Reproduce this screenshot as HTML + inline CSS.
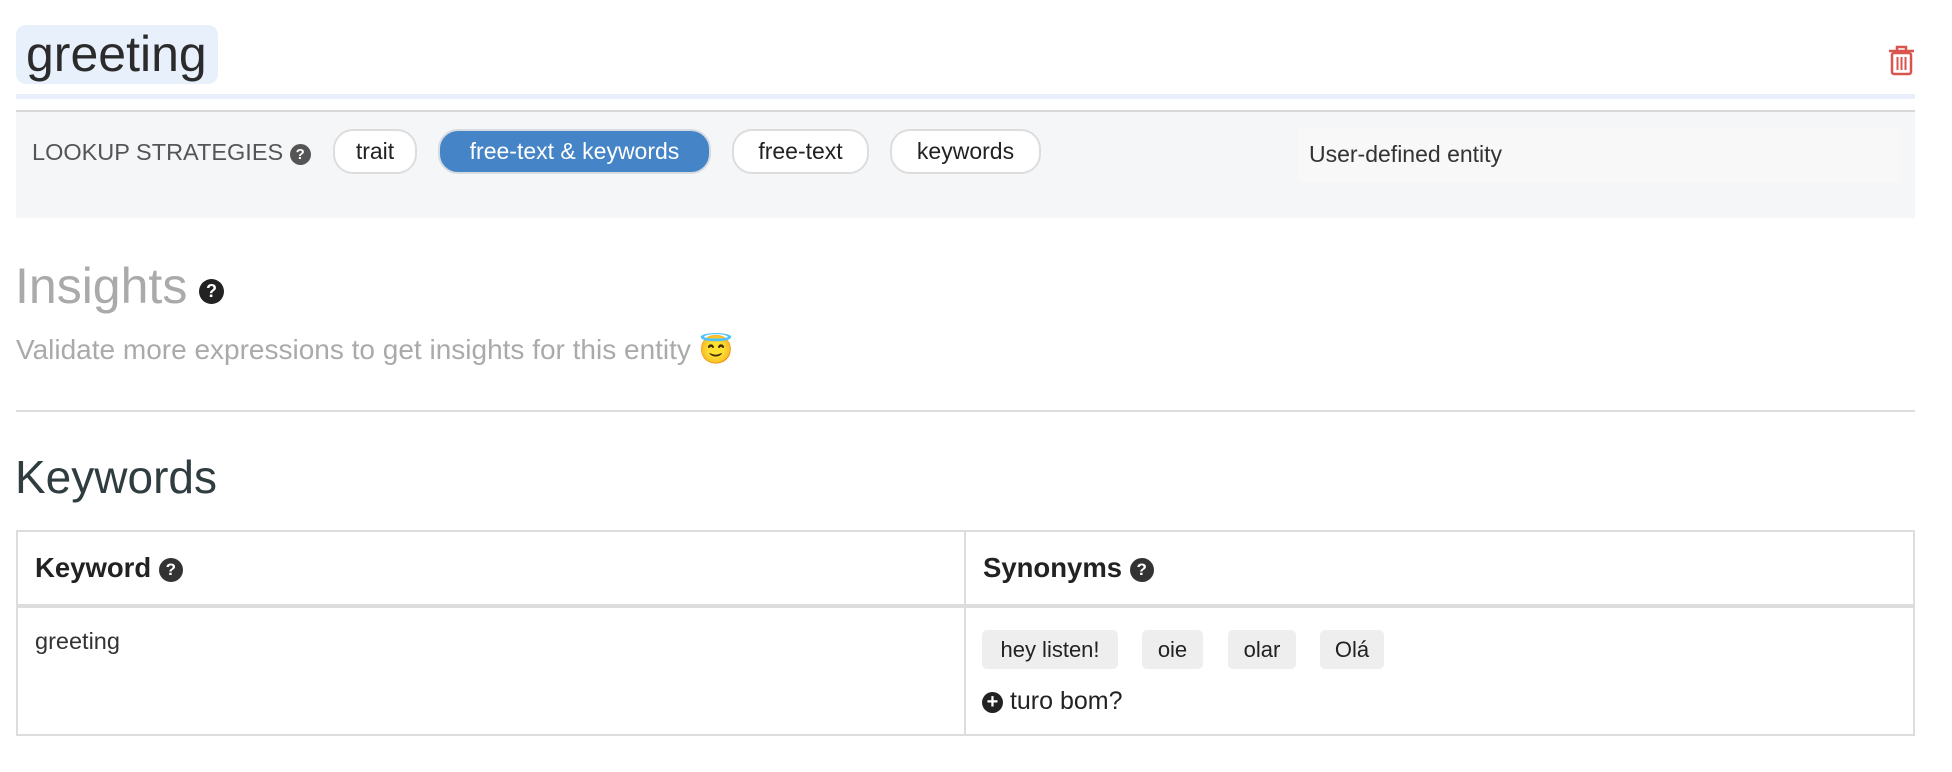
<!DOCTYPE html>
<html><head><meta charset="utf-8"><style>
*{box-sizing:border-box;margin:0;padding:0}
body{width:1952px;height:772px;background:#fff;font-family:"Liberation Sans",sans-serif;color:#333;position:relative;overflow:hidden}
.a{position:absolute}
.q{display:inline-block;border-radius:50%;background:#333;color:#fff;font-weight:bold;text-align:center}
.pill{position:absolute;top:129px;height:45px;border:2px solid #ddd;border-radius:20px;background:#fff;font-size:23px;line-height:41px;text-align:center;color:#222}
.chip{position:absolute;top:630px;height:39px;background:#eee;border-radius:5px;font-size:22px;line-height:39px;text-align:center;color:#222}
</style></head><body>
<div class="a" style="left:16px;top:25px;width:202px;height:59px;background:#e8f0fc;border-radius:10px"></div>
<div class="a" style="left:26px;top:25px;font-size:50px;line-height:59px;color:#2b2b2b">greeting</div>
<svg class="a" style="left:1888px;top:45px" width="27" height="31" viewBox="0 0 27 31"><path d="M9 5V2h9v3M1 6h25" stroke="#d9534f" stroke-width="2.5" fill="none"/><rect x="4" y="8" width="19" height="21" rx="2" stroke="#d9534f" stroke-width="2.5" fill="none"/><path d="M9.5 12v13M13.5 12v13M17.5 12v13" stroke="#d9534f" stroke-width="2"/></svg>
<div class="a" style="left:16px;top:94px;width:1899px;height:5px;background:#e8effb"></div>
<div class="a" style="left:16px;top:110px;width:1899px;height:2px;background:#d8d8d8"></div>
<div class="a" style="left:16px;top:112px;width:1899px;height:106px;background:#f5f6f8"></div>
<div class="a" style="left:32px;top:140px;font-size:23.5px;line-height:24px;color:#555">LOOKUP STRATEGIES <span class="q" style="width:21px;height:21px;font-size:15px;line-height:21px;background:#555;vertical-align:1px">?</span></div>
<div class="pill" style="left:333px;width:84px">trait</div>
<div class="pill" style="left:438px;width:273px;background:#4584c6;color:#fff;border-color:#d6dbe2">free-text &amp; keywords</div>
<div class="pill" style="left:732px;width:137px">free-text</div>
<div class="pill" style="left:890px;width:151px">keywords</div>
<div class="a" style="left:1299px;top:127px;width:601px;height:55px;background:#f8f8f9;font-size:23px;line-height:55px;padding-left:10px;color:#333">User-defined entity</div>
<div class="a" style="left:15px;top:256px;font-size:50px;line-height:60px;color:#aaa">Insights</div>
<span class="a q" style="left:199px;top:279px;width:25px;height:25px;font-size:18px;line-height:25px;background:#222">?</span>
<div class="a" style="left:16px;top:334px;font-size:28px;line-height:32px;color:#aaa">Validate more expressions to get insights for this entity <span style="font-size:28px">😇</span></div>
<div class="a" style="left:16px;top:410px;width:1899px;height:2px;background:#ddd"></div>
<div class="a" style="left:15px;top:448px;font-size:46px;line-height:58px;color:#2f3d40">Keywords</div>
<div class="a" style="left:16px;top:530px;width:1899px;height:206px;border:2px solid #ddd"></div>
<div class="a" style="left:16px;top:604px;width:1899px;height:4px;background:#ddd"></div>
<div class="a" style="left:964px;top:530px;width:2px;height:206px;background:#ddd"></div>
<div class="a" style="left:35px;top:553px;font-size:27.5px;font-weight:bold;line-height:30px;color:#222">Keyword <span class="q" style="width:24px;height:24px;font-size:17px;line-height:24px;vertical-align:2px">?</span></div>
<div class="a" style="left:983px;top:553px;font-size:27.5px;font-weight:bold;line-height:30px;color:#222">Synonyms <span class="q" style="width:24px;height:24px;font-size:17px;line-height:24px;vertical-align:2px">?</span></div>
<div class="a" style="left:35px;top:628px;font-size:23.5px;line-height:26px;color:#333">greeting</div>
<div class="chip" style="left:982px;width:136px">hey listen!</div>
<div class="chip" style="left:1142px;width:61px">oie</div>
<div class="chip" style="left:1228px;width:68px">olar</div>
<div class="chip" style="left:1320px;width:64px">Olá</div>
<div class="a" style="left:982px;top:686px;font-size:25px;line-height:30px;color:#222"><span class="q" style="width:21px;height:21px;font-size:20px;line-height:21px;vertical-align:1px;background:#222">+</span> turo bom?</div>
</body></html>
